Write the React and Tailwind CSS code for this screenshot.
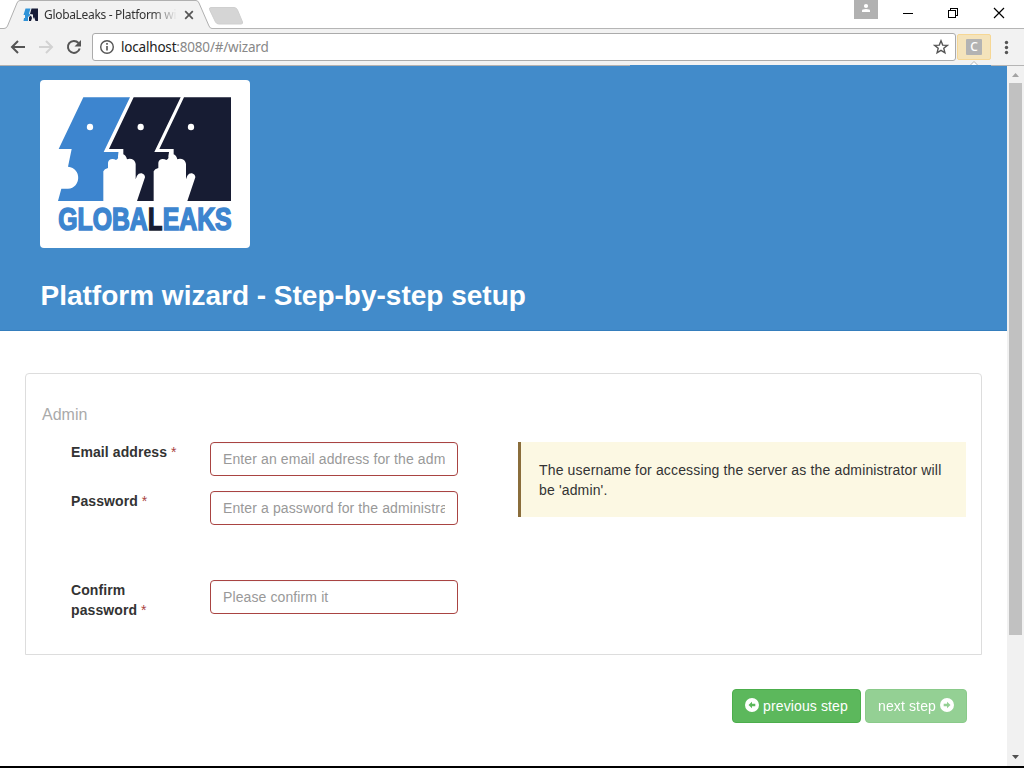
import React from "react";

const sans = "font-['Liberation_Sans',Arial,sans-serif]";
const ui = "font-['Noto_Sans','Open_Sans',sans-serif]";

function Favicon() {
  return (
    <svg width="15" height="14" viewBox="0 0 15 14" className="shrink-0">
      <path d="M2.500 0.500H7.500L6 5.500L7.500 7L5 9V13H0.500L1 10H2V7H0.500Z" fill="#2f93d8" />
      <path d="M8.500 0.500H15V13H12.500L11 9L10 11V6.500L7 6Z" fill="#171c38" />
      <path d="M6 9L8 7.500L9 10L8 13H6Z" fill="#171c38" />
    </svg>
  );
}

function TabStrip() {
  return (
    <div className="relative flex h-[29px] bg-white">
      <svg width="260" height="29" className="absolute left-0 top-0">
        <path d="M0 29V28.500H4Q6.500 28.500 7.500 26L17 3Q18 0.500 20 0.500H196Q198 0.500 199 3L209 26Q210 28.500 212 28.500V29Z" fill="#f2f2f2" />
        <path d="M0 28.500H4Q6.500 28.500 7.500 26L17 3Q18 0.500 20 0.500H196Q198 0.500 199 3L209 26Q210 28.500 212 28.500H260" fill="none" stroke="#b0b0b0" />
        <path d="M211 7.500H234Q236.500 7.500 237.500 10L242.500 22Q243 24 241 24H219Q216.500 24 215.500 22L209.500 9.500Q209 7.500 211 7.500Z" fill="#d5d5d5" stroke="#cfcfcf" />
      </svg>
      <div className="relative flex h-[29px] w-[212px] items-center pl-[23px]">
        <Favicon />
        <div className={`${ui} ml-[6px] w-[134px] overflow-hidden whitespace-nowrap pt-px text-[12px] leading-[16px] tracking-[-0.320px] text-[#333] [mask-image:linear-gradient(to_right,black_108px,transparent_133px)]`}>
          GlobaLeaks - Platform wizard
        </div>
        <svg width="10" height="10" viewBox="0 0 10 10" className="ml-[6px]">
          <path d="M1.200 1.200L8.800 8.800M8.800 1.200L1.200 8.800" stroke="#555" strokeWidth="1.700" />
        </svg>
      </div>
      <div className="relative flex flex-1 justify-end border-b border-[#b5b5b5]">
        <div className="h-[19px] w-6 bg-[#b1b1b1]">
          <svg width="24" height="19" viewBox="0 0 24 19">
            <circle cx="12" cy="6" r="2.100" fill="#fff" />
            <path d="M8 12V10.500Q8 9 12 9T16 10.500V12Z" fill="#fff" />
          </svg>
        </div>
        <svg width="146" height="28" viewBox="0 0 146 28" fill="none" stroke="#000" shapeRendering="crispEdges">
          <path d="M25 13.500H35" />
          <path d="M70.500 10.500H77.500V17.500H70.500ZM72.500 10.500V8.500H79.500V15.500H77.500" />
          <path d="M116 8L126 18M126 8L116 18" shapeRendering="auto" strokeWidth="1.200" />
        </svg>
      </div>
    </div>
  );
}

function Toolbar() {
  return (
    <div className="relative flex h-[37px] items-start bg-[#f2f2f2]">
      <svg width="92" height="36" viewBox="0 29 92 36" fill="none" strokeWidth="2">
        <path d="M25 47H12M18 41L12 47L18 53" stroke="#555" />
        <path d="M39 47H52M46 41L52 47L46 53" stroke="#d2d2d2" />
        <path d="M78.500 43A6 6 0 1 0 79.700 48.500" stroke="#555" />
        <path d="M81 40V46.500H74.500Z" fill="#555" stroke="none" />
      </svg>
      <div className="mt-1 flex h-7 w-[864px] items-center rounded-[3px] border border-[#ababab] bg-white">
        <svg width="28" height="26" viewBox="0 0 28 26" fill="none" stroke="#555">
          <circle cx="14" cy="13" r="6.300" strokeWidth="1.400" />
          <path d="M14 12V16.500M14 9V10.700" strokeWidth="1.600" />
        </svg>
        <span className={`${ui} text-[13.500px] leading-[18px] tracking-[-0.190px] text-[#888]`}>
          <span className="text-[#222]">localhost</span>:8080/#/wizard
        </span>
        <svg width="16" height="16" viewBox="0 0 16 16" className="ml-auto mr-[6px]">
          <path d="M8 1.800L9.700 6.100L14.300 6.400L10.800 9.300L11.900 13.800L8 11.300L4.100 13.800L5.200 9.300L1.700 6.400L6.300 6.100Z" fill="none" stroke="#555" strokeWidth="1.400" />
        </svg>
      </div>
      <div className="ml-px mt-[5px] flex h-[26px] w-[34px] items-center justify-center rounded-[2px] border border-[#f6d795] bg-[#f4e3bb]">
        <div className={`${ui} flex h-4 w-4 items-center justify-center rounded-[1px] bg-[#b3b3b3] text-[12px] font-medium leading-none text-white`}>C</div>
      </div>
      <svg width="33" height="36" viewBox="0 0 33 36" fill="#555">
        <circle cx="15.500" cy="13.500" r="1.700" />
        <circle cx="15.500" cy="18.500" r="1.700" />
        <circle cx="15.500" cy="23.500" r="1.700" />
      </svg>
      <div className="absolute bottom-0 left-0 h-px w-[630px] bg-[#b5b2b0]" />
      <div className="absolute bottom-0 left-[630px] h-px w-[361px] bg-[#428bca]" />
      <div className="absolute bottom-0 left-[991px] h-px w-[33px] bg-[#b5b5b5]" />
      <svg width="8" height="4" className="absolute bottom-px left-[970px]">
        <path d="M0.500 4L4 0.500L7.500 4" fill="#fff" stroke="#b5b5b5" />
      </svg>
    </div>
  );
}

function Hand({ x }) {
  return (
    <path
      transform={`translate(${x} 0)`}
      d="M202 375V286Q205 278 216 276V260Q218 249 229 249Q236 249 240 252Q248 249 246 241L248 229V219H259V235Q269 235 273 250Q279 247 287 249Q297 252 299 264V310L303 299Q308 291 317 292Q327 295 327 304L303 375Z"
      fill="#fff"
    />
  );
}

function Logo() {
  return (
    <div className="h-[168px] w-[210px] rounded bg-white">
      <svg width="210" height="168" viewBox="12 12 630 504" role="img" aria-label="GlobaLeaks">
        <path d="M142 64H282L203 228H248V375H66L76 338H96C136 336 138 276 96 272L107 219H68Z" fill="#3d85cf" />
        <path d="M293 64H434L355 228H400V375H262V219H219Z" fill="#171c33" />
        <path d="M444 64H585V375H413V219H370Z" fill="#171c33" />
        <Hand x={0} />
        <Hand x={151} />
        <ellipse cx="162" cy="153" rx="9.500" ry="10" fill="#fff" />
        <ellipse cx="314" cy="153" rx="9.500" ry="10" fill="#fff" />
        <ellipse cx="465" cy="153" rx="9.500" ry="10" fill="#fff" />
        <g fontFamily="Liberation Sans, Arial, sans-serif" fontWeight="700" fontSize="95" strokeWidth="5" strokeLinejoin="miter" strokeMiterlimit="3">
          <text x="67" y="462" textLength="268" lengthAdjust="spacingAndGlyphs" fill="#3d85cf" stroke="#3d85cf">GLOBA</text>
          <text x="336" y="462" textLength="43" lengthAdjust="spacingAndGlyphs" fill="#171c33" stroke="#171c33">L</text>
          <text x="380" y="462" textLength="207" lengthAdjust="spacingAndGlyphs" fill="#3d85cf" stroke="#3d85cf">EAKS</text>
        </g>
      </svg>
    </div>
  );
}

function Field({ label, placeholder, type = "text", className = "" }) {
  return (
    <div className={`flex items-start ${className}`}>
      <label className="w-[139px] pr-6 text-[14px] font-bold leading-5 tracking-[0.090px] text-[#333]">
        {label} <span className="font-normal text-[#a94442]">*</span>
      </label>
      <input
        type={type}
        placeholder={placeholder}
        className="h-[34px] w-[248px] rounded border border-[#a94442] bg-white px-3 text-[14px] leading-5 tracking-[0.110px] text-[#555] shadow-[inset_0_1px_1px_rgba(0,0,0,0.03)] placeholder:text-[#999]"
      />
    </div>
  );
}

function StepIcon({ flip }) {
  return (
    <svg width="14" height="14" viewBox="0 0 14 14" className={flip ? "-mt-0.5 rotate-180" : "-mt-0.5"}>
      <path fillRule="evenodd" fill="#fff" d="M7 0A7 7 0 1 0 7 14A7 7 0 1 0 7 0ZM3.500 7L7 3.700V5.800H10.300V8.200H7V10.300Z" />
    </svg>
  );
}

function Scrollbar() {
  return (
    <div className="flex w-[17px] flex-col items-center bg-[#f1f1f1]">
      <svg width="17" height="17"><path d="M5 11L8.500 7L12 11Z" fill="#a3a3a3" /></svg>
      <div className="h-[552px] w-[13px] bg-[#c1c1c1]" />
      <svg width="17" height="17" className="mt-auto"><path d="M5 6H12L8.500 10Z" fill="#505050" /></svg>
    </div>
  );
}

export default function App() {
  return (
    <div className={`${sans} flex h-[768px] w-[1024px] flex-col overflow-hidden border-b-2 border-black bg-white`}>
      <TabStrip />
      <Toolbar />
      <div className="flex min-h-0 flex-1">
        <main className="flex flex-1 flex-col">
          <header className="h-[265px] border-b border-[#357ebd] bg-[#428bca] pl-10 pt-[14px]">
            <Logo />
            <h1 className="mt-[31px] whitespace-nowrap pl-[0.500px] text-[28px] font-bold leading-[33px] text-white">
              Platform wizard - Step-by-step setup
            </h1>
          </header>
          <section className="ml-[25px] mt-[42px] h-[282px] w-[957px] rounded-t border border-[#ddd] px-[15px] pt-[31px]">
            <h2 className="pl-px text-[16px] leading-5 text-[#aaa]">Admin</h2>
            <div className="mt-[17px] flex items-start">
              <form className="w-[477px] pl-[30px]">
                <Field label="Email address" placeholder="Enter an email address for the admin" />
                <Field label="Password" type="password" placeholder="Enter a password for the administrator" className="mt-[15px]" />
                <Field label="Confirm password" type="password" placeholder="Please confirm it" className="mt-[55px]" />
              </form>
              <p className="h-[75px] w-[448px] border-l-[3px] border-[#8a6d3b] bg-[#fcf8e3] py-[18px] pl-[18px] pr-5 text-[14px] leading-5 tracking-[0.150px] text-[#333]">
                The username for accessing the server as the administrator will be 'admin'.
              </p>
            </div>
          </section>
          <div className="mt-[34px] flex justify-end gap-1 pr-10">
            <button className="flex h-[34px] w-[129px] items-center justify-center gap-1 whitespace-nowrap rounded border border-[#4cae4c] bg-[#5cb85c] text-[14px] tracking-[0.120px] text-white">
              <StepIcon />
              previous step
            </button>
            <button className="flex h-[34px] w-[102px] items-center justify-center gap-1 whitespace-nowrap rounded border border-[#4cae4c] bg-[#5cb85c] text-[14px] tracking-[0.120px] text-white opacity-65">
              next step
              <StepIcon flip />
            </button>
          </div>
        </main>
        <Scrollbar />
      </div>
    </div>
  );
}
